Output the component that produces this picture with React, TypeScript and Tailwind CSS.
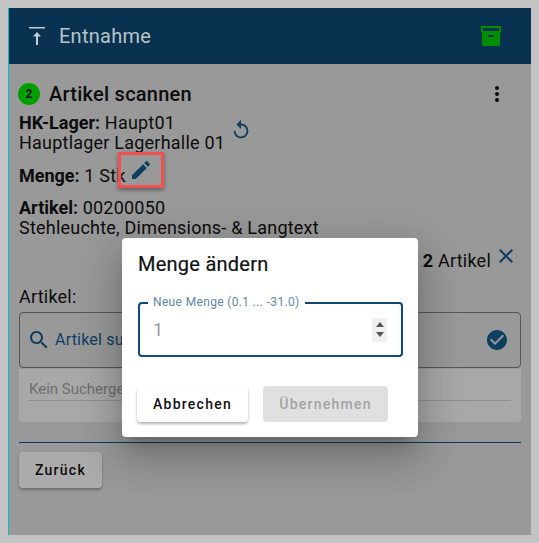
import React from "react";

function Arrow() {
  return (
    <svg width="24" height="24" viewBox="0 0 24 24" className="text-[#c4cdd3]" fill="currentColor">
      <rect x="4" y="3" width="16" height="1.5" />
      <path d="M12 8l4 4.5h-3V21h-2v-8.5H8z" />
    </svg>
  );
}

export default function App() {
  return (
    <div className="relative w-[539px] h-[543px] bg-[#c3c3c3] p-2 overflow-hidden font-['Roboto',sans-serif] text-[#0c0c0c]">
      <div className="w-[523px] h-[527px] bg-[#999999] border-l border-[#00bcd0] flex flex-col">
        <div className="h-14 shrink-0 bg-[#08324f] flex items-center pl-[16px] pr-[28px] text-[#b9c3c9]">
          <Arrow />
          <span className="ml-[10px] text-[20px] font-normal tracking-[0.25px]">Entnahme</span>
          <svg width="24" height="24" viewBox="0 0 24 24" className="ml-auto text-[#008f00]" fill="currentColor">
            <path d="M2 2h20v6.5h-1V21a1 1 0 0 1-1 1H4a1 1 0 0 1-1-1V8.5H2zM4 4v3h16V4zM9 11v2h6v-2z" fillRule="evenodd" />
          </svg>
        </div>
        <div className="flex-1 px-[10px] flex flex-col">
          <div className="flex items-center mt-[19px] h-[22px] -ml-px">
            <span className="w-[22px] h-[22px] rounded-full bg-[#00a000] flex items-center justify-center text-[12px] font-bold">2</span>
            <span className="ml-[9px] text-[20px] font-medium tracking-[0.25px]">Artikel scannen</span>
            <svg width="24" height="24" viewBox="0 0 24 24" className="ml-auto mr-[12px]" fill="#0a0a0a">
              <circle cx="12" cy="6" r="2" />
              <circle cx="12" cy="12" r="2" />
              <circle cx="12" cy="18" r="2" />
            </svg>
          </div>
          <div className="flex items-center mt-[8px] tracking-[0.22px]">
            <div className="text-[18px] leading-[20px]">
              <div><b className="font-bold tracking-normal">HK-Lager:</b> Haupt01</div>
              <div>Hauptlager Lagerhalle 01</div>
            </div>
            <svg width="22" height="22" viewBox="0 0 24 24" className="ml-[5px] -mt-[7px] text-[#0e3f61]" fill="currentColor">
              <path d="M12 5V1L7 6l5 5V7c3.31 0 6 2.69 6 6s-2.69 6-6 6-6-2.69-6-6H4c0 4.42 3.58 8 8 8s8-3.58 8-8-3.58-8-8-8z" />
            </svg>
          </div>
          <div className="mt-[13px] text-[18px] leading-[20px] tracking-[0.22px]"><b className="font-bold tracking-normal">Menge:</b> 1 Stk</div>
          <div className="mt-[12px] text-[18px] leading-[20px] tracking-[0.22px]">
            <div><b className="font-bold tracking-normal">Artikel:</b> 00200050</div>
            <div>Stehleuchte, Dimensions- &amp; Langtext</div>
          </div>
          <div className="flex items-center justify-end mt-[10px] h-6 pr-[3px] text-[18px] tracking-[0.22px]">
            <span className="mt-px"><b className="font-bold">2</b> Artikel</span>
            <svg width="24" height="24" viewBox="0 0 24 24" className="ml-[3px] -mt-[8px] text-[#0e3f61]" fill="currentColor">
              <path d="M19 6.41 17.59 5 12 10.59 6.41 5 5 6.41 10.59 12 5 17.59 6.41 19 12 13.41 17.59 19 19 17.59 13.41 12z" />
            </svg>
          </div>
          <div className="mt-[15px] text-[18px] leading-[20px] tracking-[0.22px]">Artikel:</div>
          <div className="mt-[5px] h-14 rounded border border-[#555555] flex items-center pl-[7px] pr-[11px] text-[#0e3f61]">
            <svg width="24" height="24" viewBox="0 0 24 24" fill="currentColor">
              <path d="M15.5 14h-.79l-.28-.27C15.41 12.59 16 11.11 16 9.5 16 5.91 13.09 3 9.5 3S3 5.91 3 9.5 5.91 16 9.5 16c1.61 0 3.09-.59 4.23-1.57l.27.28v.79l5 4.99L20.49 19zm-6 0C7.01 14 5 11.99 5 9.5S7.01 5 9.5 5 14 7.01 14 9.5 11.99 14 9.5 14z" />
            </svg>
            <span className="ml-[4px] text-[16px] tracking-[0.2px]">Artikel suchen</span>
            <svg width="24" height="24" viewBox="0 0 24 24" className="ml-auto" fill="currentColor">
              <path d="M12 2C6.48 2 2 6.48 2 12s4.48 10 10 10 10-4.48 10-10S17.52 2 12 2zm-2 15-5-5 1.41-1.41L10 14.17l7.59-7.59L19 8l-9 9z" />
            </svg>
          </div>
          <div className="mt-px h-[53px] rounded-b bg-[#a8a8a8] px-[10px] pt-[10px]">
            <div className="h-[22px] border-b border-[#8f8f8f] text-[15px] leading-[20px] text-[#6e6e6e]">Kein Suchergebnis</div>
          </div>
          <div className="mt-5 h-px bg-[#0a3a5c]" />
          <button className="mt-[9px] w-[83px] h-9 rounded bg-[#ababab] shadow-[0_2px_3px_rgba(0,0,0,0.3)] text-[14px] font-medium tracking-[1.25px] text-[#0c0c0c]">Zurück</button>
        </div>
      </div>

      <div className="absolute left-[118px] top-[152px] w-[46px] h-[36px] border-[3px] border-[#f35050] shadow-[0_2px_4px_rgba(0,0,0,0.4)] flex items-center justify-center">
        <svg width="24" height="24" viewBox="0 0 24 24" className="text-[#0e3f61]" fill="currentColor">
          <path d="M3 17.25V21h3.75L17.81 9.94l-3.75-3.75L3 17.25zM20.71 7.04a1 1 0 0 0 0-1.41l-2.34-2.34a1 1 0 0 0-1.41 0l-1.83 1.83 3.75 3.75 1.83-1.83z" />
        </svg>
      </div>

      <div className="absolute left-[122px] top-[238px] w-[296px] h-[199px] bg-white rounded shadow-[0_11px_15px_-7px_rgba(0,0,0,0.2),0_24px_38px_3px_rgba(0,0,0,0.14),0_9px_46px_8px_rgba(0,0,0,0.12)] pl-[16px] pr-[15px] flex flex-col">
        <div className="mt-[13px] text-[20px] font-normal tracking-[0.25px] leading-[26px] text-[#111111] [-webkit-text-stroke:0.2px_#111111]">Menge ändern</div>
        <div className="relative mt-[25px] w-[265px] h-[55px] rounded border-2 border-[#0c4a78] flex items-center pl-[13px] pr-[14px] text-[18px] text-[#9a9a9a]">
          <span className="absolute left-[8px] -top-[10px] bg-white px-[5px] text-[12px] leading-[16px] tracking-[0.35px] text-[#6189ab]">Neue Menge (0.1 ... -31.0)</span>
          <span className="w-[10px]">1</span>
          <span className="ml-auto w-[15px] h-[24px] bg-[#f0f0f0] flex flex-col items-center justify-center gap-[5px]">
            <svg width="8" height="5" viewBox="0 0 8 5" fill="#555555"><path d="M4 0l4 5H0z" /></svg>
            <svg width="8" height="5" viewBox="0 0 8 5" fill="#555555"><path d="M4 5L0 0h8z" /></svg>
          </span>
        </div>
        <div className="mt-[29px] -ml-px flex">
          <button className="w-[111px] h-9 rounded bg-white shadow-[0_2px_3px_rgba(0,0,0,0.3)] text-[14px] font-medium tracking-[1.25px] text-[#111111]">Abbrechen</button>
          <button className="ml-[15px] w-[125px] h-9 rounded bg-[#e0e0e0] text-[14px] font-medium tracking-[1.25px] text-[#a3a3a3]">Übernehmen</button>
        </div>
      </div>
    </div>
  );
}
